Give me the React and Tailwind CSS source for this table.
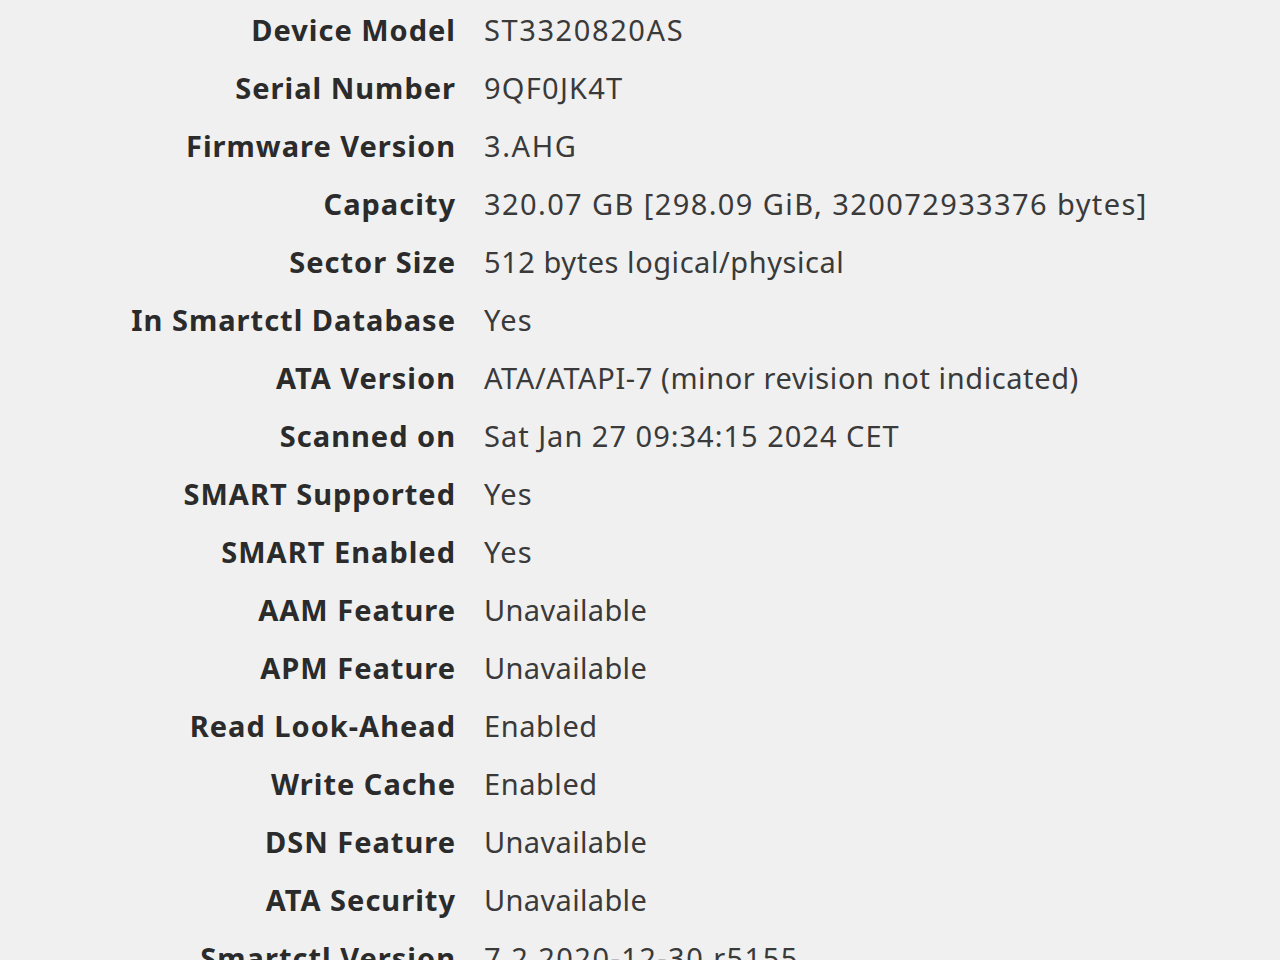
const ROWS = [
  ['Device Model', 'ST3320820AS', 'tracking-[1.6px]'],
  ['Serial Number', '9QF0JK4T', 'tracking-[1.25px]'],
  ['Firmware Version', '3.AHG', 'tracking-[1.6px]'],
  ['Capacity', '320.07 GB [298.09 GiB, 320072933376 bytes]', 'tracking-[1.4px]'],
  ['Sector Size', '512 bytes logical/physical', 'tracking-[0.55px]'],
  ['In Smartctl Database', 'Yes', 'tracking-[1.2px]'],
  ['ATA Version', 'ATA/ATAPI-7 (minor revision not indicated)', 'tracking-[0.6px]'],
  ['Scanned on', 'Sat Jan 27 09:34:15 2024 CET', 'tracking-[1px]'],
  ['SMART Supported', 'Yes', 'tracking-[1.2px]'],
  ['SMART Enabled', 'Yes', 'tracking-[1.2px]'],
  ['AAM Feature', 'Unavailable', 'tracking-[0.35px]'],
  ['APM Feature', 'Unavailable', 'tracking-[0.35px]'],
  ['Read Look-Ahead', 'Enabled', 'tracking-[0.55px]'],
  ['Write Cache', 'Enabled', 'tracking-[0.55px]'],
  ['DSN Feature', 'Unavailable', 'tracking-[0.35px]'],
  ['ATA Security', 'Unavailable', 'tracking-[0.35px]'],
  ['Smartctl Version', '7.2 2020-12-30 r5155', 'tracking-[1.45px]'],
];

export default function App() {
  return (
    <div className="h-[960px] w-[1280px] overflow-hidden bg-[#f0f0f0] pt-[1px] font-['Noto_Sans',sans-serif] text-[29px] text-[#2e3436]">
      <div className="grid grid-cols-[456px_1fr] gap-x-[28px]">
        {ROWS.map(([label, value, track]) => (
          <div key={label} className="contents">
            <div className="flex h-[58px] items-center justify-end font-bold tracking-[1px] text-[#2b2b2b] whitespace-nowrap">
              {label}
            </div>
            <div className={`flex h-[58px] items-center text-[#3a3a3a] whitespace-nowrap ${track}`}>
              {value}
            </div>
          </div>
        ))}
      </div>
    </div>
  );
}
